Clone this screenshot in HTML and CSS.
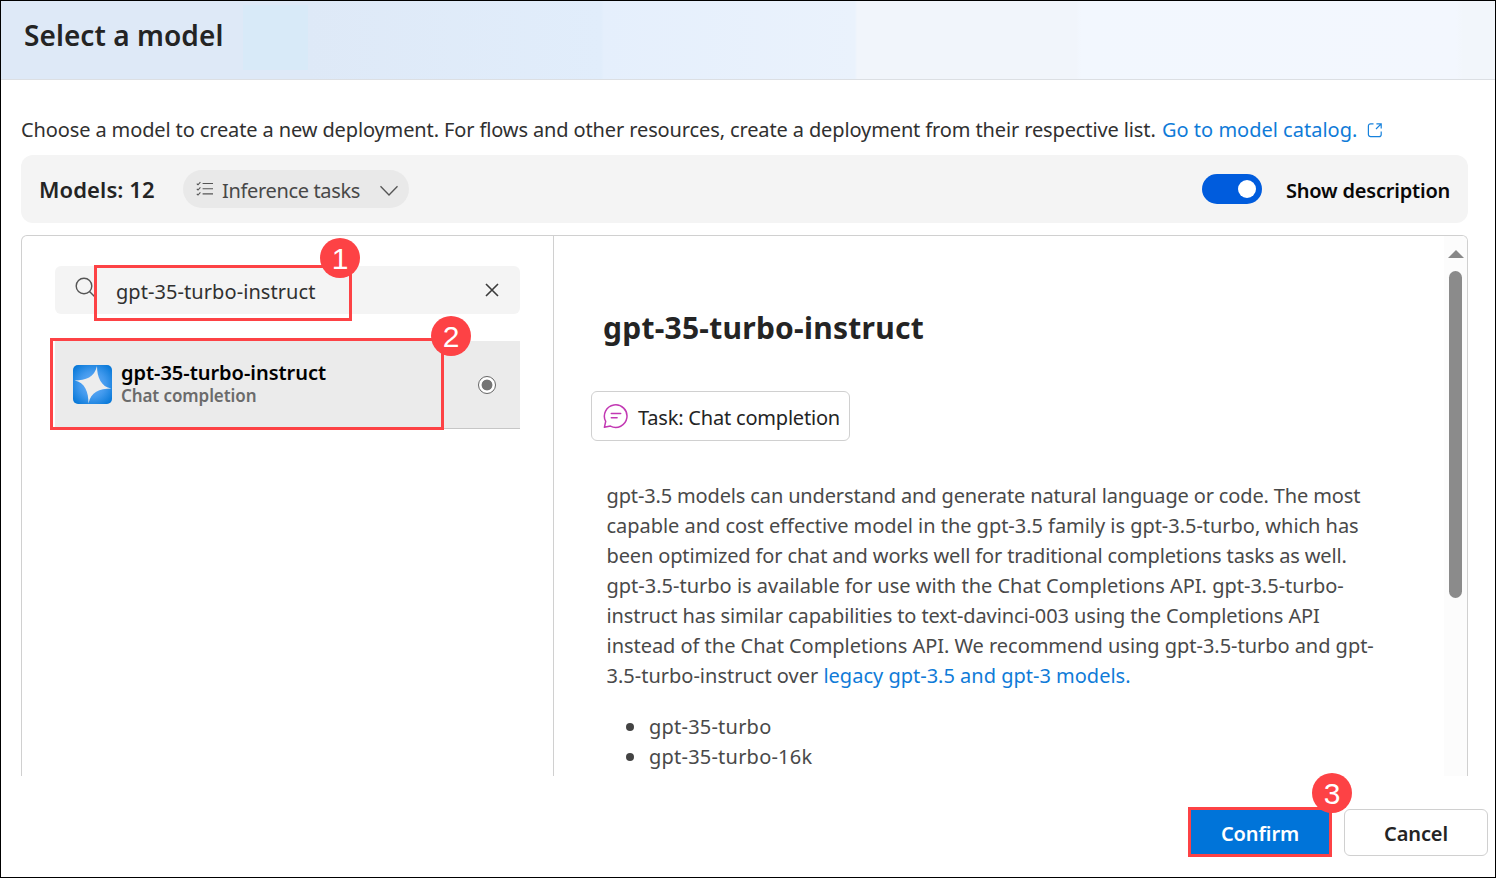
FILE: index.html
```html
<!DOCTYPE html>
<html lang="en">
<head>
<meta charset="utf-8">
<title>Select a model</title>
<link rel="stylesheet" href="styles.css">
</head>
<body>
<div class="dialog">
  <header class="dialog-header"><h1 class="dialog-title">Select a model</h1></header>
  <main class="dialog-body">
    <p class="intro"><span class="intro-text">Choose a model to create a new deployment. For flows and other resources, create a deployment from their respective list.</span><a class="link catalog-link">Go to model catalog.</a>
      <svg class="external-icon" width="16" height="16" viewBox="0 0 16 16" fill="none" stroke="#1681dc" stroke-width="1.2"><path d="M6.500 1.800H3.600A2.200 2.200 0 0 0 1.400 4v8.400a2.200 2.200 0 0 0 2.200 2.200H12a2.200 2.200 0 0 0 2.200-2.200V9.500M9.400 1.800h4.800v4.800M14.200 1.800 9 7"/></svg>
    </p>
    <div class="toolbar">
      <span class="model-count">Models: 12</span>
      <button class="filter">
        <svg width="18" height="16" viewBox="0 0 18 16" fill="none" stroke="#555" stroke-width="1.1"><path d="M.8 2.600l1.200 1.200L4.400 1.200M.8 7.800 2 9l2.400-2.600M.8 12.800 2 14l2.400-2.600M6.600 2.500H17M6.600 7.700H17M6.600 12.900H17"/></svg>
        <span class="filter-label">Inference tasks</span>
        <svg class="chevron" width="20" height="12" viewBox="0 0 20 12" fill="none" stroke="#555" stroke-width="1.3"><path d="M1.500 1.200 10 10l8.500-8.800"/></svg>
      </button>
      <span class="switch"><span class="switch-thumb"></span></span>
      <span class="switch-label">Show description</span>
    </div>
    <div class="panels">
      <section class="list-pane">
        <div class="search">
          <svg class="search-icon" width="22" height="22" viewBox="0 0 22 22" fill="none" stroke="#555" stroke-width="1.4"><circle cx="9" cy="9" r="7.800"/><path d="M14.500 14.500 21 21"/></svg>
          <span class="search-value">gpt-35-turbo-instruct</span>
          <svg class="clear-icon" width="14" height="14" viewBox="0 0 14 14" fill="none" stroke="#3b3b3b" stroke-width="1.6"><path d="M1 1l12 12M13 1 1 13"/></svg>
        </div>
        <div class="model-item">
          <svg width="39" height="39" viewBox="0 0 39 39">
            <defs><radialGradient id="tile" cx=".5" cy=".5" r=".68"><stop offset="0" stop-color="#70b2fa"/><stop offset=".5" stop-color="#4199ed"/><stop offset="1" stop-color="#0074d5"/></radialGradient></defs>
            <rect width="39" height="39" rx="5" fill="url(#tile)"/>
            <path fill="#ededed" d="M24 1C24 12 28 22 38.500 23.500C26 23.500 18 27 15.500 38.500C15.500 27 12 17.500 1.500 15.500C13 15.500 21.500 12 24 1Z"/>
          </svg>
          <div class="model-text"><div class="model-name">gpt-35-turbo-instruct</div><div class="model-task">Chat completion</div></div>
          <span class="radio"></span>
        </div>
      </section>
      <section class="detail-pane">
        <div class="detail">
          <h2 class="detail-title">gpt-35-turbo-instruct</h2>
          <div class="task-chip">
            <svg width="26" height="26" viewBox="0 0 26 26" fill="none" stroke="#c239b3" stroke-width="1.5"><path d="M1.400 24.300 2.700 18.400A11.300 11.300 0 1 1 7.400 23.100ZM8.300 10.400h9.400M8.300 14.800h5.800" stroke-linejoin="round" stroke-linecap="round"/></svg>
            <span class="chip-label">Task: Chat completion</span>
          </div>
          <p class="description"><span class="tighter">gpt-3.5 models can understand and generate natural language or code. The most</span><br><span class="snug">capable and cost effective model in the gpt-3.5 family is gpt-3.5-turbo, which has</span><br><span class="tighter">been optimized for chat and works well for traditional completions tasks as well.</span><br>gpt-3.5-turbo is available for use with the Chat Completions API. gpt-3.5-turbo-<br><span class="tight">instruct has similar capabilities to text-davinci-003 using the Completions API</span><br><span class="snug">instead of the Chat Completions API. We recommend using gpt-3.5-turbo and gpt-</span><br>3.5-turbo-instruct over <a class="link">legacy gpt-3.5 and gpt-3 models.</a></p>
          <ul class="versions"><li>gpt-35-turbo</li><li>gpt-35-turbo-16k</li></ul>
        </div>
        <div class="scrollbar"><span class="scroll-arrow"></span><span class="scroll-thumb"></span></div>
      </section>
    </div>
  </main>
  <footer class="actions">
    <button class="button primary"><span>Confirm</span></button>
    <button class="button"><span>Cancel</span></button>
  </footer>
  <div class="callout callout-search"></div><div class="step step-search">1</div>
  <div class="callout callout-model"></div><div class="step step-model">2</div>
  <div class="callout callout-confirm"></div><div class="step step-confirm">3</div>
</div>
</body>
</html>
```
FILE: styles.css
```css
* { box-sizing: border-box; }
body { margin: 0; font-family: "Noto Sans", "Open Sans", sans-serif; font-size: 20px; color: #242424; }
h1, h2, p, ul { margin: 0; padding: 0; }
button { font: inherit; color: inherit; }
svg { display: block; flex: none; }
.dialog { position: relative; display: flex; flex-direction: column; width: 1496px; height: 878px; border: 1px solid #000; background: #fff; overflow: hidden; white-space: nowrap; }
.dialog-header { flex: none; height: 79px; padding: 13px 23px; border-bottom: 1px solid #dcdfe3;
  background: linear-gradient(#d8eaf8, #d8eaf8) 242px 4px / 65px 65px no-repeat, linear-gradient(90deg, #dee9f7 0, #dee9f7 307px, #e1edfb 600px, #e5effc 603px, #eaf2fc 854px, #f1f5fb 856px, #f1f5fb 1075px, #f2f7fe 1080px, #f3f7fe 1455px, #f2f6fb 1462px); }
.dialog-title { font-size: 28px; line-height: 42px; font-weight: 600; letter-spacing: .07px; }
.dialog-body { padding: 33px 27px 0 20px; height: 696px; flex: none; }
.intro { display: flex; align-items: center; height: 32px; margin-bottom: 10px; color: #303030; }
.intro-text { width: 1141px; letter-spacing: -.122px; }
.link { color: #0f7bd8; }
.catalog-link { width: 205px; }
.external-icon { margin-top: 2px; }
.toolbar { display: flex; align-items: center; height: 68px; padding: 0 18px; border-radius: 12px; background: #f4f4f4; }
.model-count { width: 144px; font-size: 22px; font-weight: 600; letter-spacing: .1px; }
.filter { display: flex; align-items: center; width: 226px; height: 38px; padding: 0 10px 0 13px; border: 0; border-radius: 19px; background: #e9e9e9; color: #484848; }
.filter-label { margin-left: 8px; padding-top: 2px; letter-spacing: -.34px; }
.chevron { margin-left: auto; margin-top: 4px; }
.switch { display: flex; align-items: center; justify-content: flex-end; width: 60px; height: 30px; margin-left: auto; padding-right: 6px; border-radius: 15px; background: #005cdd; }
.switch-thumb { width: 18px; height: 18px; border-radius: 50%; background: #fff; }
.switch-label { width: 164px; margin-left: 24px; padding-top: 2px; font-weight: 600; letter-spacing: -.2px; color: #080808; }
.panels { display: flex; height: 541px; margin-top: 12px; border: 1px solid #d0d0d0; border-bottom: 0; border-radius: 6px 6px 0 0; overflow: hidden; }
.list-pane { width: 532px; padding: 30px 33px; border-right: 1px solid #d0d0d0; }
.search { display: flex; align-items: center; height: 48px; padding: 0 21px 0 20px; border-radius: 6px; background: #f4f4f4; }
.search-icon { margin-top: -5px; }
.search-value { margin-left: 19px; margin-top: 2px; letter-spacing: .07px; color: #303030; }
.clear-icon { margin-left: auto; }
.model-item { display: flex; align-items: center; height: 88px; margin-top: 27px; padding: 0 24px 0 18px; border-bottom: 1px solid #c6c6c6; background: #ebebeb; }
.model-text { margin-left: 9px; padding-bottom: 2px; }
.model-name { font-weight: 600; line-height: 24px; letter-spacing: -.03px; color: #000; }
.model-task { font-size: 17px; font-weight: 600; line-height: 22px; letter-spacing: -.09px; color: #6b6b6b; }
.radio { width: 18px; height: 18px; margin-left: auto; border: 1px solid #666; border-radius: 50%; background: radial-gradient(circle, #757575 0 5px, #fff 5.800px); }
.detail-pane { display: flex; flex: 1; }
.detail { width: 890px; padding: 70px 0 0 37px; }
.detail-title { padding-left: 12px; font-size: 30px; line-height: 44px; font-weight: 700; letter-spacing: .25px; }
.task-chip { display: flex; align-items: center; width: 259px; height: 50px; margin-top: 41px; padding-left: 11px; border: 1px solid #d0d0d0; border-radius: 6px; }
.chip-label { margin-left: 9px; margin-top: 2px; letter-spacing: -.2px; }
.description { margin: 40px 0 0 15.500px; line-height: 30px; color: #494949; }
.tighter { letter-spacing: -.145px; }
.tight { letter-spacing: -.105px; }
.snug { letter-spacing: -.035px; }
.versions { margin: 21px 0 0 16px; list-style: none; line-height: 30px; letter-spacing: .22px; color: #494949; }
.versions li { display: flex; align-items: center; padding-left: 19px; }
.versions li::before { content: ""; width: 8px; height: 8px; margin-right: 15px; border-radius: 50%; background: #444; }
.scrollbar { display: flex; flex: 1; flex-direction: column; align-items: center; padding-top: 14px; background: #fcfcfc; }
.scroll-arrow { border: 8px solid transparent; border-top: 0; border-bottom: 8px solid #888; }
.scroll-thumb { width: 13px; height: 327px; margin-top: 13px; border-radius: 7px; background: #8b8b8b; }
.actions { display: flex; justify-content: flex-end; padding: 33px 7px 0; gap: 12px; }
.button { width: 144px; height: 47px; padding: 2px 0 0; border: 1px solid #d0d0d0; border-radius: 6px; background: #fff; font-weight: 600; letter-spacing: -.1px; }
.primary { border: 0; border-radius: 0; background: #0074d9; color: #fff; }
.callout { position: absolute; border: 3px solid #fd4245; }
.callout-search { left: 93px; top: 264px; width: 258px; height: 56px; }
.callout-model { left: 49px; top: 337px; width: 394px; height: 92px; }
.callout-confirm { left: 1187px; top: 806px; width: 144px; height: 50px; }
.step { position: absolute; width: 40px; height: 40px; border-radius: 50%; background: #fd4245; color: #fff; font: 30px/41px "Liberation Sans", sans-serif; text-align: center; }
.step-search { left: 319px; top: 237px; }
.step-model { left: 430px; top: 315px; }
.step-confirm { left: 1311px; top: 772px; }
```
